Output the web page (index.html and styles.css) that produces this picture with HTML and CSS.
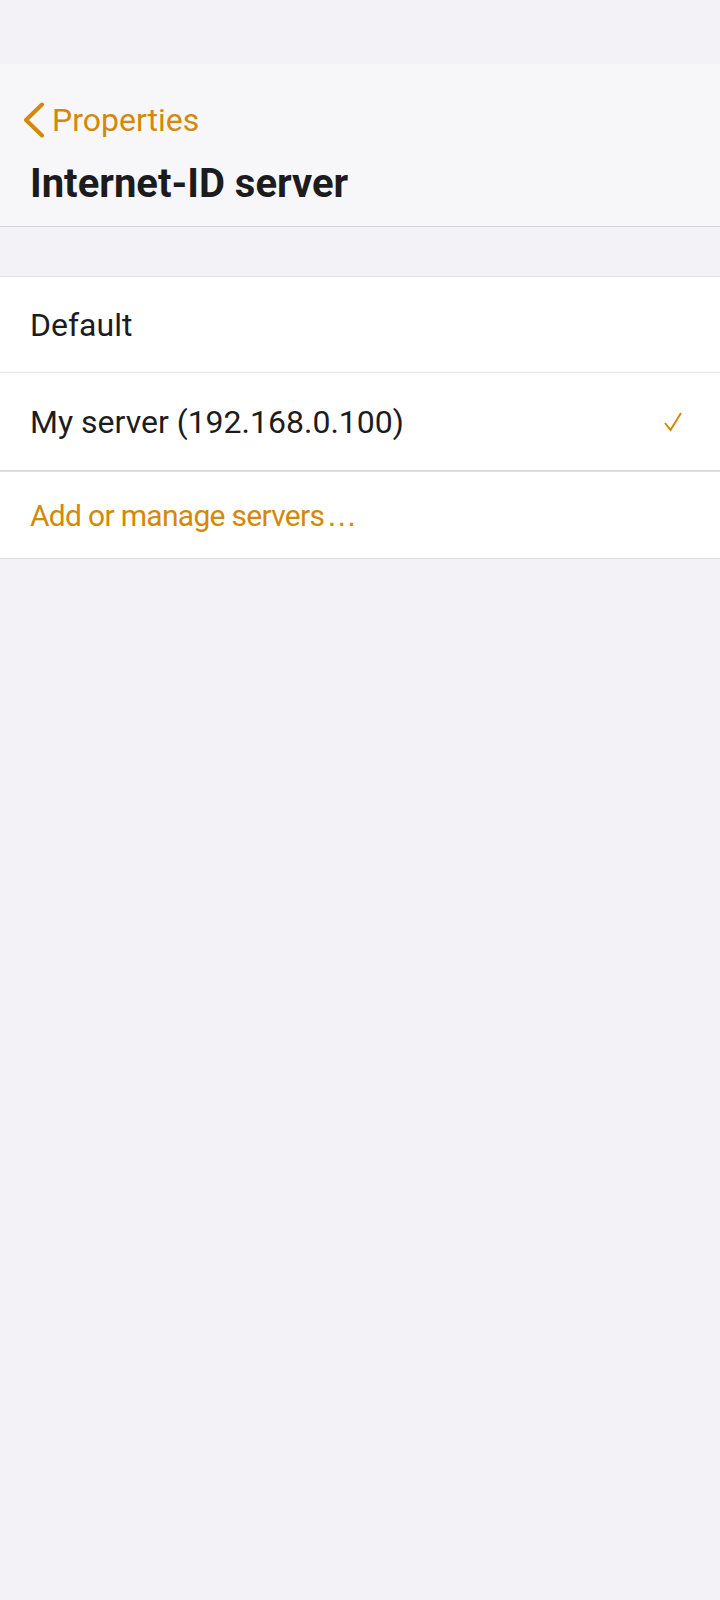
FILE: index.html
```html
<!DOCTYPE html>
<html>
<head>
<meta charset="utf-8">
<link rel="stylesheet" href="styles.css">
</head>
<body>
<div class="status"></div>
<header class="nav">
  <div class="back">
    <svg class="chev" width="22" height="36" viewBox="0 0 22 36"><path d="M19 2.5 L3 18 L19 33.5" fill="none" stroke="#D4880A" stroke-width="4" stroke-linecap="round" stroke-linejoin="round"/></svg>
    <span class="back-label">Properties</span>
  </div>
  <h1 class="title">Internet-ID server</h1>
</header>
<div class="list">
  <div class="row row-first">Default</div>
  <div class="row row-second"><span>My server (192.168.0.100)</span>
    <svg class="check" width="21" height="20" viewBox="0 0 21 20"><path d="M4 11 L9.5 18 L20 1" fill="none" stroke="#D4880A" stroke-width="2"/></svg>
  </div>
  <div class="row row-action"><span>Add or manage servers<span class="ell">…</span></span></div>
</div>
</body>
</html>
```
FILE: styles.css
```css
html, body {
  margin: 0;
  padding: 0;
}
body {
  background: #F2F2F7;
  font-family: Roboto, "Noto Sans", sans-serif;
  color: #1C1C1E;
  width: 720px;
  min-height: 1600px;
}
.status {
  height: 64px;
  background: #F2F2F7;
}
.nav {
  background: #F7F7F9;
  border-bottom: 1px solid #D6D6DA;
  height: 162px;
  box-sizing: content-box;
  padding: 0;
}
.back {
  display: flex;
  align-items: center;
  height: 40px;
  padding-top: 36px;
  padding-left: 23px;
}
.chev {
  display: block;
  margin-right: 7px;
}
.back-label {
  font-size: 32px;
  line-height: 40px;
  color: #D4880A;
}
.title {
  margin: 20px 0 0 0;
  padding-left: 30px;
  font-size: 40px;
  line-height: 48px;
  font-weight: 700;
  color: #1C1C1E;
}
.list {
  margin-top: 49px;
  background: #FFFFFF;
  border-top: 1px solid #E2E2E7;
}
.row {
  display: flex;
  align-items: center;
  justify-content: space-between;
  padding: 0 38px 0 30px;
  font-size: 32px;
  box-sizing: border-box;
}
.row-first {
  height: 96px;
  border-bottom: 1px solid #E5E5EA;
}
.row-second {
  height: 99px;
  border-bottom: 2px solid #DCDCE1;
}
.row-action {
  height: 87px;
  font-size: 30px;
  letter-spacing: -0.7px;
  padding-top: 2px;
  color: #D4880A;
  border-bottom: 1px solid #DCDCE1;
}
.ell {
  font-family: "Liberation Sans", sans-serif;
  font-size: 31px;
  letter-spacing: 0;
  margin-left: 2px;
}
.check {
  display: block;
}
```
